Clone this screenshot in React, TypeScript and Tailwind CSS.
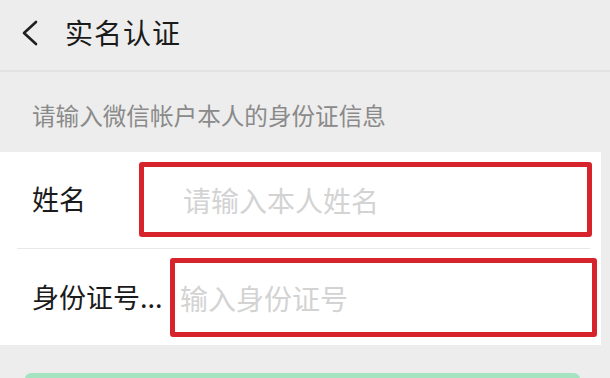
import React from "react";

const font = { fontFamily: '"Noto Sans CJK SC", "Noto Sans", sans-serif' };

export default function App() {
  return (
    <div className="w-[610px] h-[378px] overflow-hidden bg-[#ededed]" style={font}>
      {/* 顶部导航 */}
      <div className="h-[72px] flex items-center border-b-2 border-[#e2e2e2]">
        <svg width="18" height="26" viewBox="0 0 18 26" className="ml-[21px] mt-[-4px]" fill="none">
          <path d="M15 2 L3 13 L15 24" stroke="#1f1f1f" strokeWidth="2.6" strokeLinecap="round" strokeLinejoin="round" />
        </svg>
        <span className="ml-[26px] text-[28px] tracking-[1px] text-[#1b1b1b] mt-[-6px]">实名认证</span>
      </div>

      {/* 提示 */}
      <div className="h-[80px] flex items-center pl-[32px] text-[23.6px] text-[#8a8a8a] pt-[8px]">
        请输入微信帐户本人的身份证信息
      </div>

      {/* 表单 */}
      <div className="w-[601px] bg-white">
        <div className="flex items-center pt-[10px] pb-[11px]">
          <span className="w-[139px] pl-[32px] text-[27px] text-[#1b1b1b]">姓名</span>
          <div className="w-[453px] h-[75px] border-[5px] border-[#d7232c] rounded-[3px] flex items-center pl-[39px]">
            <input
              placeholder="请输入本人姓名"
              className="w-full outline-none bg-transparent text-[28px] placeholder:text-[#d3d3d3]"
            />
          </div>
        </div>
        <div className="ml-[17px] w-[573px] h-px bg-[#e8e8e8]" />
        <div className="flex items-center pt-[9px] pb-[8px]">
          <span className="w-[170px] pl-[32px] text-[27px] text-[#1b1b1b] whitespace-nowrap">身份证号...</span>
          <div className="w-[427px] h-[79px] border-[5px] border-[#d7232c] rounded-[3px] flex items-center pl-[5px]">
            <input
              placeholder="输入身份证号"
              className="w-full outline-none bg-transparent text-[28px] placeholder:text-[#d3d3d3]"
            />
          </div>
        </div>
      </div>

      {/* 按钮 */}
      <div className="mt-[28px] ml-[25px] w-[555px] h-[40px] rounded-[6px] bg-[#a6e4c1]" />
    </div>
  );
}
